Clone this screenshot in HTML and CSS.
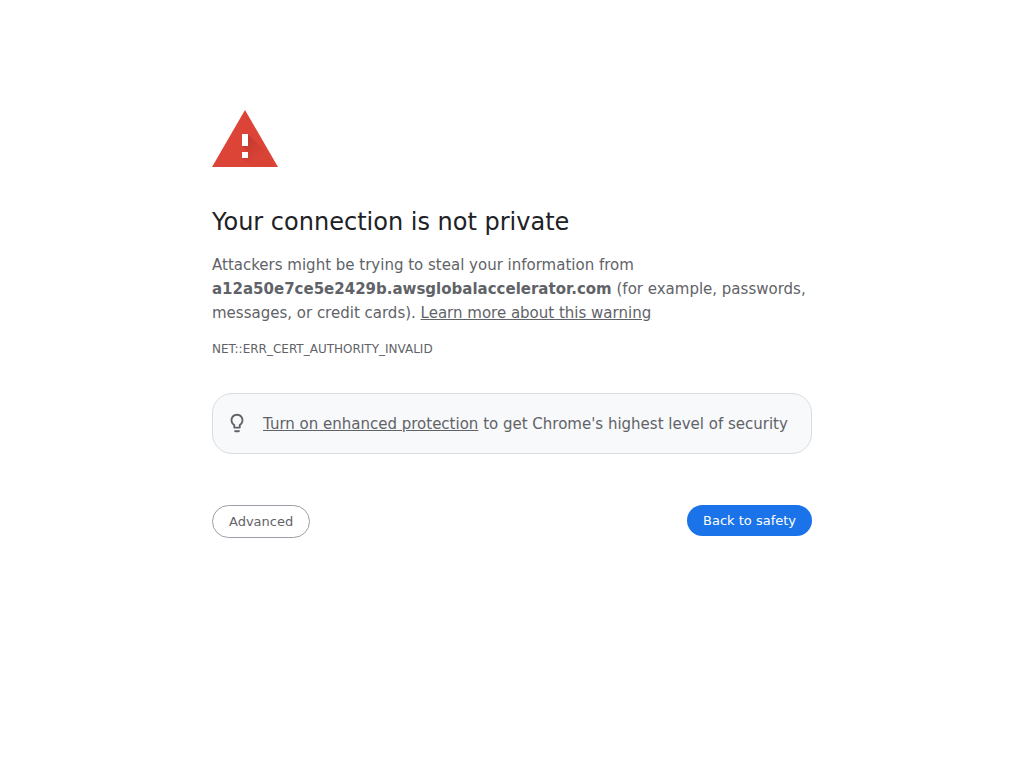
FILE: index.html
```html
<!DOCTYPE html>
<html lang="en">

<head>
    <meta charset="UTF-8">
    <meta name="viewport" content="width=device-width, initial-scale=1.0">
    <title>Privacy error</title>
    <link rel="stylesheet" href="styles.css">
</head>

<body>
    <main class="interstitial">
        <svg class="icon" viewBox="0 0 66 57" aria-hidden="true">
            <defs>
                <linearGradient id="shadow" x1="32" y1="34" x2="46" y2="48" gradientUnits="userSpaceOnUse">
                    <stop offset="0" stop-color="#a52b20" stop-opacity="0.4" />
                    <stop offset="1" stop-color="#a52b20" stop-opacity="0.04" />
                </linearGradient>
            </defs>
            <path fill="#db4437" d="M33 0L66 57H0z" />
            <path fill="url(#shadow)" d="M36 24L53 41L62 57H39L30 48L36 42L30 36z" />
            <path fill="#fff" d="M30 24h6v12h-6zM30 42h6v6h-6z" />
        </svg>

        <h1>Your connection is not private</h1>
        <p class="message">Attackers might be trying to steal your information from <strong>a12a50e7ce5e2429b.awsglobalaccelerator.com</strong> (for example, passwords, messages, or credit cards). <a href="#">Learn more about this warning</a></p>
        <div class="error-code">NET::ERR_CERT_AUTHORITY_INVALID</div>

        <div class="promo">
            <svg class="bulb" viewBox="0 0 24 24" aria-hidden="true">
                <path fill="#5f6368" d="M9 21c0 .5.4 1 1 1h4c.6 0 1-.5 1-1v-1H9v1zm3-19C8.100 2 5 5.100 5 9c0 2.400 1.200 4.500 3 5.700V17c0 .5.4 1 1 1h6c.6 0 1-.5 1-1v-2.300c1.800-1.300 3-3.400 3-5.700 0-3.900-3.100-7-7-7zm2.900 11.100l-.9.6V16h-4v-2.300l-.9-.6C7.800 12.200 7 10.600 7 9c0-2.800 2.200-5 5-5s5 2.200 5 5c0 1.600-.8 3.200-2.100 4.100z" />
            </svg>
            <p><a href="#">Turn on enhanced protection</a> to get Chrome's highest level of security</p>
        </div>

        <div class="buttons">
            <button type="button" class="secondary">Advanced</button>
            <button type="button" class="primary">Back to safety</button>
        </div>
    </main>
</body>

</html>
```
FILE: styles.css
```css
* {
    box-sizing: border-box;
    margin: 0;
    padding: 0;
}

body {
    background-color: #fff;
    color: #5f6368;
    font-family: "DejaVu Sans", sans-serif;
    font-size: 15px;
    line-height: 24px;
}

a {
    color: inherit;
}

.interstitial {
    max-width: 600px;
    margin: 0 auto;
    padding-top: 110px;
}

.icon {
    display: block;
    width: 66px;
    height: 57px;
    margin-bottom: 40px;
}

h1 {
    margin-bottom: 16px;
    color: #202124;
    font-size: 24px;
    font-weight: normal;
    line-height: 30px;
}

.error-code {
    margin-top: 16px;
    font-size: 12px;
    line-height: 16px;
}

.promo {
    display: flex;
    align-items: flex-start;
    gap: 15px;
    margin-top: 36px;
    padding: 18px 13px 17px;
    background-color: #f8f9fa;
    border: 1px solid #dadce0;
    border-radius: 20px;
}

.bulb {
    flex: none;
    width: 22px;
    height: 22px;
}

.buttons {
    display: flex;
    align-items: flex-start;
    justify-content: space-between;
    margin-top: 51px;
}

button {
    padding: 8px 16px;
    border: none;
    border-radius: 20px;
    font-family: inherit;
    font-size: 13px;
    line-height: 15px;
    cursor: pointer;
}

.primary {
    background-color: #1a73e8;
    color: #fff;
}

.secondary {
    background-color: #fff;
    border: 1px solid #9aa0a6;
    color: #5f6368;
}
```
